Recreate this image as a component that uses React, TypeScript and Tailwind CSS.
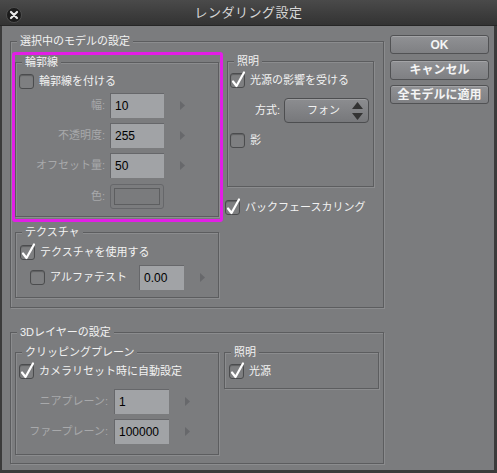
import type { ReactNode } from 'react'

const FONT = { fontFamily: '"Liberation Sans", "Noto Sans CJK JP", sans-serif' }

function Group({ label, className, children }: { label: string; className?: string; children?: ReactNode }) {
  return (
    <div className={`relative border border-[#5c5d5f] shadow-[inset_1px_1px_0_#8b8c8e,1px_1px_0_#8b8c8e] ${className ?? ''}`}>
      <span className="absolute -top-[8px] left-[6px] bg-[#7b7c7e] px-[3px] text-[11px] leading-[14px] text-[#f2f2f2]">
        {label}
      </span>
      {children}
    </div>
  )
}

function Check({ checked }: { checked?: boolean }) {
  return (
    <span className="relative block w-[15px] h-[15px] shrink-0 rounded-[3px] border border-[#4b4c4e] bg-[#7e7f81] shadow-[inset_0_1px_1px_rgba(0,0,0,0.25)]">
      {checked && (
        <svg className="absolute -left-[1px] -top-[3px] overflow-visible" width="17" height="18" viewBox="0 0 17 18">
          <path d="M3 10.5 L6.5 15 L14 1.5" fill="none" stroke="#ffffff" strokeWidth="2.2" strokeLinecap="round" strokeLinejoin="round" />
        </svg>
      )}
    </span>
  )
}

function CheckRow({ checked, label, className }: { checked?: boolean; label: string; className?: string }) {
  return (
    <div className={`flex items-center gap-[5px] h-[15px] ${className ?? ''}`}>
      <Check checked={checked} />
      <span className="text-[11px] leading-[15px] text-[#f2f2f2] whitespace-nowrap">{label}</span>
    </div>
  )
}

function Field({ value, className }: { value: string; className?: string }) {
  return (
    <div className={`h-[25px] flex items-center pl-[4px] bg-[#a1a3a6] border-t border-l border-[#66676a] text-[12px] text-black ${className ?? ''}`}>
      {value}
    </div>
  )
}

function Arrow({ className }: { className?: string }) {
  return (
    <svg className={className} width="5" height="9" viewBox="0 0 5 9">
      <polygon points="0,0 5,4.5 0,9" fill="#67686b" />
    </svg>
  )
}

function Dim({ children, className }: { children: ReactNode; className?: string }) {
  return <span className={`text-[11px] text-[#a8a9ab] text-right whitespace-nowrap ${className ?? ''}`}>{children}</span>
}

function Button({ label, className }: { label: string; className?: string }) {
  return (
    <div className={`w-[99px] flex items-center justify-center rounded-[3px] border border-[#515254] bg-gradient-to-b from-[#909194] to-[#7f8083] shadow-[inset_0_1px_0_rgba(255,255,255,0.18)] text-[12px] font-bold text-[#f4f4f4] ${className ?? ''}`}>
      {label}
    </div>
  )
}

export default function App() {
  return (
    <div className="w-[497px] h-[473px] flex flex-col bg-[#7b7c7e] overflow-hidden" style={FONT}>
      {/* title bar */}
      <div className="relative h-[26px] shrink-0 flex items-center justify-center bg-gradient-to-b from-[#4a4a4a] to-[#333333] border-b border-[#262626]">
        <svg className="absolute left-[6px] top-[7px]" width="16" height="16" viewBox="0 0 16 16">
          <circle cx="8" cy="8" r="7.5" fill="#1c1c1c" stroke="#555" strokeWidth="0.8" />
          <path d="M5 5 L11 11 M11 5 L5 11" stroke="#e8e8e8" strokeWidth="2.2" strokeLinecap="round" />
        </svg>
        <span className="text-[13px] text-[#d6d6d6] tracking-[0.5px]">レンダリング設定</span>
      </div>

      {/* body */}
      <div className="flex-1 flex border-l-2 border-r-[3px] border-b-[3px] border-[#3b3b3b] pl-[8px]">
        <div className="w-[374px] flex flex-col">
          <Group label="選択中のモデルの設定" className="mt-[15px] w-[374px] h-[267px] flex">
            <div className="w-[213px] flex flex-col">
              <div className="ml-[1px] mt-[10px] w-[211px] h-[170px] border-[3px] border-[#e21ee6] rounded-[3px]">
                <Group label="輪郭線" className="mt-[7px] w-[204px] h-[155px] flex flex-col">
                  <CheckRow label="輪郭線を付ける" className="mt-[11px] ml-[3px]" />
                  <div className="mt-[4px] flex items-center">
                    <Dim className="w-[89px]">幅:</Dim>
                    <Field value="10" className="ml-[5px] w-[54px]" />
                    <Arrow className="ml-[16px]" />
                  </div>
                  <div className="mt-[5px] flex items-center">
                    <Dim className="w-[89px]">不透明度:</Dim>
                    <Field value="255" className="ml-[5px] w-[54px]" />
                    <Arrow className="ml-[16px]" />
                  </div>
                  <div className="mt-[5px] flex items-center">
                    <Dim className="w-[89px]">オフセット量:</Dim>
                    <Field value="50" className="ml-[5px] w-[54px]" />
                    <Arrow className="ml-[16px]" />
                  </div>
                  <div className="mt-[6px] flex items-center">
                    <Dim className="w-[89px]">色:</Dim>
                    <div className="ml-[5px] w-[54px] h-[25px] p-[3px] rounded-[3px] border border-[#66676a] bg-[#7b7c7e]">
                      <div className="w-full h-full border border-[#5d5e60] bg-[#7a7b7d]" />
                    </div>
                  </div>
                </Group>
              </div>
              <Group label="テクスチャ" className="ml-[4px] mt-[10px] w-[204px] h-[66px] flex flex-col">
                <CheckRow checked label="テクスチャを使用する" className="mt-[12px] ml-[4px]" />
                <div className="mt-[5px] ml-[14px] flex items-center h-[25px]">
                  <Check />
                  <span className="ml-[5px] w-[89px] text-[11px] text-[#f2f2f2]">アルファテスト</span>
                  <Field value="0.00" className="w-[45px]" />
                  <Arrow className="ml-[16px]" />
                </div>
              </Group>
            </div>
            <div className="flex-1 flex flex-col">
              <Group label="照明" className="ml-[3px] mt-[19px] w-[147px] h-[126px] flex flex-col">
                <CheckRow checked label="光源の影響を受ける" className="mt-[11px] ml-[2px]" />
                <div className="mt-[10px] flex items-center">
                  <span className="w-[52px] text-right text-[11px] text-[#f2f2f2]">方式:</span>
                  <div className="relative ml-[4px] w-[85px] h-[25px] flex items-center justify-center rounded-[4px] border border-[#4d4e50] bg-gradient-to-b from-[#8c8d90] to-[#77787b] shadow-[inset_0_1px_0_rgba(255,255,255,0.15)]">
                    <span className="pr-[6px] text-[11px] text-[#f2f2f2]">フォン</span>
                    <svg className="absolute right-[5px] top-[3px]" width="11" height="18" viewBox="0 0 11 18">
                      <polygon points="5.5,0 11,7 0,7" fill="#333" />
                      <polygon points="0,11 11,11 5.5,18" fill="#333" />
                    </svg>
                  </div>
                </div>
                <CheckRow label="影" className="mt-[10px] ml-[2px]" />
              </Group>
              <CheckRow checked label="バックフェースカリング" className="mt-[13px] ml-[1px]" />
            </div>
          </Group>

          <Group label="3Dレイヤーの設定" className="mt-[24px] w-[374px] h-[132px] flex">
            <Group label="クリッピングプレーン" className="ml-[4px] mt-[19px] w-[204px] h-[103px] flex flex-col">
              <CheckRow checked label="カメラリセット時に自動設定" className="mt-[11px] ml-[3px]" />
              <div className="mt-[10px] flex items-center">
                <Dim className="w-[92px]">ニアプレーン:</Dim>
                <Field value="1" className="ml-[6px] w-[55px]" />
                <Arrow className="ml-[16px]" />
              </div>
              <div className="mt-[5px] flex items-center">
                <Dim className="w-[92px]">ファープレーン:</Dim>
                <Field value="100000" className="ml-[6px] w-[55px]" />
                <Arrow className="ml-[16px]" />
              </div>
            </Group>
            <Group label="照明" className="ml-[5px] mt-[19px] w-[155px] h-[37px] flex flex-col">
              <CheckRow checked label="光源" className="mt-[11px] ml-[4px]" />
            </Group>
          </Group>
        </div>

        <div className="ml-[6px] flex flex-col">
          <Button label="OK" className="mt-[9px] h-[19px]" />
          <Button label="キャンセル" className="mt-[6px] h-[20px]" />
          <Button label="全モデルに適用" className="mt-[5px] h-[19px]" />
        </div>
      </div>
    </div>
  )
}
